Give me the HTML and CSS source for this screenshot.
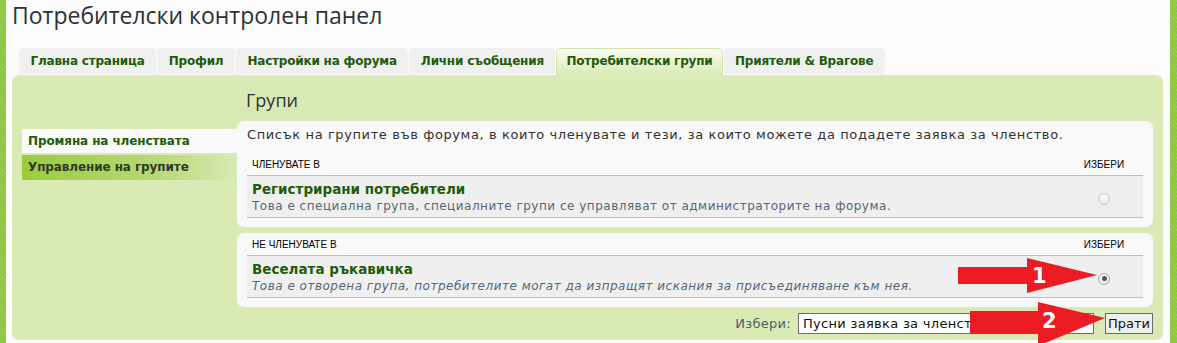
FILE: index.html
```html
<!DOCTYPE html>
<html lang="bg">
<head>
<meta charset="utf-8">
<title>Потребителски контролен панел</title>
<link rel="stylesheet" href="styles.css">
</head>
<body>
<div class="page">
  <div class="stripe"></div>
  <div class="content">
    <h1 class="title">Потребителски контролен панел</h1>
    <ul class="tabs">
      <li class="tab">Главна страница</li>
      <li class="tab">Профил</li>
      <li class="tab">Настройки на форума</li>
      <li class="tab">Лични съобщения</li>
      <li class="tab tab-active">Потребителски групи</li>
      <li class="tab">Приятели &amp; Врагове</li>
    </ul>
    <div class="panel">
      <ul class="menu">
        <li class="menu-item menu-current">Промяна на членствата</li>
        <li class="menu-item menu-other">Управление на групите</li>
      </ul>
      <div class="main">
        <h2 class="heading">Групи</h2>
        <div class="box">
          <p class="intro">Списък на групите във форума, в които членувате и тези, за които можете да подадете заявка за членство.</p>
          <div class="thead thead-first">
            <span>ЧЛЕНУВАТЕ В</span>
            <span class="col-choose">ИЗБЕРИ</span>
          </div>
          <div class="row">
            <div class="row-info">
              <div class="group-name">Регистрирани потребители</div>
              <div class="group-desc">Това е специална група, специалните групи се управляват от администраторите на форума.</div>
            </div>
            <div class="col-choose"><span class="radio"></span></div>
          </div>
        </div>
        <div class="box">
          <div class="thead">
            <span>НЕ ЧЛЕНУВАТЕ В</span>
            <span class="col-choose">ИЗБЕРИ</span>
          </div>
          <div class="row">
            <div class="row-info">
              <div class="group-name">Веселата ръкавичка</div>
              <div class="group-desc group-desc-italic">Това е отворена група, потребителите могат да изпращят искания за присъединяване към нея.</div>
            </div>
            <div class="col-choose"><span class="radio radio-checked"></span></div>
          </div>
        </div>
        <div class="actions">
          <span class="actions-label">Избери:</span>
          <span class="select">Пусни заявка за членство</span>
          <span class="button">Прати</span>
        </div>
      </div>
    </div>
  </div>
  <div class="stripe stripe-right"></div>
</div>
<svg class="arrows" width="1177" height="343" viewBox="0 0 1177 343">
  <polygon class="arrow" points="958,267 1027,267 1027,258 1097,275 1027,293 1027,284 958,284"/>
  <text class="arrow-num" x="1032" y="283">1</text>
  <polygon class="arrow" points="970,311 1038,311 1038,302 1105,318 1038,346 1038,334 970,334"/>
  <text class="arrow-num" x="1042" y="328">2</text>
</svg>
</body>
</html>
```

FILE: styles.css
```css
* { box-sizing: border-box; }
html, body { margin: 0; padding: 0; }
body {
  background: #fcfcfc;
  font-family: "DejaVu Sans", Verdana, sans-serif;
  color: #333;
  width: 1177px;
  height: 343px;
  overflow: hidden;
  position: relative;
}
.page {
  display: flex;
  height: 343px;
}
.stripe {
  width: 6px;
  flex: none;
  background-color: #8dc63f;
  background-image: repeating-linear-gradient(45deg, rgba(255,255,255,0.12) 0 1px, transparent 1px 3px);
}
.stripe-right { width: 7px; }
.content {
  flex: 1;
  padding: 0 7px 0 6px;
  background: #fcfcfc;
}
.title {
  margin: 0;
  font-family: "Open Sans", "DejaVu Sans", sans-serif;
  font-weight: normal;
  font-size: 23px;
  line-height: 30px;
  color: #2c333a;
  height: 48px;
}
.tabs {
  list-style: none;
  margin: 0;
  padding: 0 0 0 7px;
  display: flex;
  gap: 1px;
  height: 27px;
}
.tab {
  background: #f0f0f0;
  border-radius: 5px 5px 0 0;
  height: 26px;
  padding: 0 11.5px;
  font-weight: bold;
  font-size: 12px;
  line-height: 26px;
  color: #205c08;
  letter-spacing: -0.2px;
}
.tab-active {
  height: 27px;
  padding: 0 9px;
  background: linear-gradient(#fbfdf5, #d9eab5);
  border: 1px solid #cfe3aa;
  border-bottom: none;
  line-height: 24px;
}
.panel {
  background: #d9eab5;
  border-radius: 7px;
  display: grid;
  grid-template-columns: 215px 1fr;
  padding: 0 10px 6px 10px;
}
.menu {
  list-style: none;
  margin: 54px 0 0 0;
  padding: 0;
}
.menu-item {
  height: 24px;
  line-height: 24px;
  padding-left: 6px;
  font-weight: bold;
  font-size: 12px;
  letter-spacing: -0.1px;
  margin-bottom: 2px;
}
.menu-current {
  background: #fafafa;
  color: #205c08;
}
.menu-other {
  height: 25px;
  line-height: 25px;
  background: linear-gradient(90deg, #9ccb3f, #b5d873 60%, #d9eab5);
  color: #2f3a24;
}
.main {
  min-width: 0;
}
.heading {
  margin: 14px 0 10px 9px;
  font-family: "Open Sans", "DejaVu Sans", sans-serif;
  font-weight: normal;
  font-size: 18px;
  line-height: 22px;
  color: #2c333a;
}
.box {
  background: #f9f9f9;
  border-radius: 7px;
  padding: 2px 10px 9px 10px;
  margin-bottom: 6px;
}
.intro {
  margin: 4px 0 0 0;
  font-size: 13px;
  line-height: 16px;
  letter-spacing: 0.6px;
  color: #333;
}
.thead {
  display: flex;
  align-items: flex-end;
  height: 21px;
  padding: 0 0 5px 5px;
  border-bottom: 1px solid #b6bfc9;
  font-family: "Liberation Sans", Arial, sans-serif;
  font-size: 10px;
  line-height: 11px;
  color: #000;
}
.thead-first { margin-top: 12px; }
.thead > span:first-child { flex: 1; }
.col-choose {
  width: 78px;
  flex: none;
  text-align: center;
}
.row {
  display: flex;
  align-items: center;
  background: #efefef;
  border-bottom: 1px solid #b6bfc9;
  height: 42px;
}
.row-info {
  flex: 1;
  padding: 4px 0 2px 5px;
}
.group-name {
  font-weight: bold;
  font-size: 13.5px;
  line-height: 17px;
  color: #1f5d07;
}
.group-desc {
  font-size: 12px;
  line-height: 16px;
  letter-spacing: 0.5px;
  color: #55677a;
}
.group-desc-italic { font-style: italic; }
.row .col-choose {
  display: flex;
  justify-content: center;
  padding-top: 4px;
}
.radio {
  width: 12px;
  height: 12px;
  border-radius: 50%;
  border: 1px solid #c8c8c8;
  background: radial-gradient(circle at 50% 35%, #ffffff, #e2e2e2);
  display: inline-block;
  position: relative;
}
.radio-checked {
  border-color: #a8a8a8;
}
.radio-checked::after {
  content: "";
  position: absolute;
  left: 2.5px;
  top: 2.5px;
  width: 5px;
  height: 5px;
  border-radius: 50%;
  background: #555;
}
.actions {
  display: flex;
  justify-content: flex-end;
  align-items: center;
  height: 21px;
  margin-top: 6px;
}
.actions-label {
  font-size: 13px;
  color: #4e5e6e;
  margin-right: 7px;
  letter-spacing: 0.3px;
}
.select {
  width: 296px;
  height: 21px;
  border: 1px solid #6b6b6b;
  background: #fff;
  font-size: 13px;
  line-height: 19px;
  padding-left: 4px;
  color: #111;
  letter-spacing: 0.3px;
  margin-right: 11px;
}
.button {
  width: 48px;
  height: 21px;
  border: 1px solid #6b6b6b;
  background: #efefef;
  font-size: 13px;
  line-height: 19px;
  text-align: center;
  color: #111;
}
.arrows {
  position: absolute;
  left: 0;
  top: 0;
  pointer-events: none;
}
.arrow { fill: #ec1c24; }
.arrow-num {
  fill: #fff;
  font-family: "DejaVu Sans", sans-serif;
  font-weight: bold;
  font-size: 21px;
}
```
